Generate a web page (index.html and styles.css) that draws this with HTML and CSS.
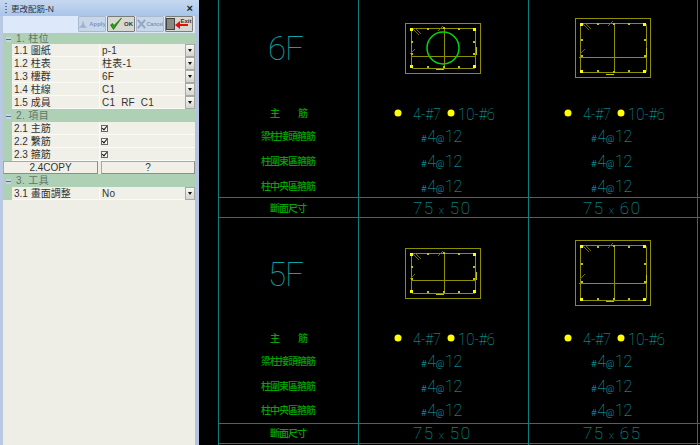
FILE: index.html
```html
<!DOCTYPE html>
<html lang="zh-Hant">
<head>
<meta charset="utf-8">
<title>更改配筋</title>
<link rel="stylesheet" href="styles.css">
</head>
<body>
<div class="app">
  <aside class="panel">
    <header class="titlebar">
      <span class="grip"></span>
      <span class="title">更改配筋-N</span>
      <span class="close">×</span>
    </header>
    <div class="toolbar">
      <button class="tool tool-off">
        <svg class="ico" width="10" height="11" viewBox="0 0 11 11"><path d="M5.500 1 L7 6 L10 9 H1 L4 6 Z" fill="#9fb3cc"/></svg>
        <span class="tool-label">Apply</span>
      </button>
      <button class="tool tool-on">
        <svg class="ico" width="14" height="14" viewBox="0 0 14 14"><path d="M1.500 8 L4.500 12.500 L12.500 1 L5 8.500 L3.500 6.500 Z" fill="#2a9a18" stroke="#1c7a10" stroke-width=".8"/></svg>
        <span class="tool-label">OK</span>
      </button>
      <button class="tool tool-off">
        <svg class="ico" width="9" height="12" viewBox="0 0 11 12"><path d="M1 1 L10 11 M10 1 L1 11" stroke="#8fa6c6" stroke-width="2.500"/></svg>
        <span class="tool-label tool-label-small">Cancel</span>
      </button>
      <button class="tool tool-on">
        <svg class="ico-exit" width="24" height="14" viewBox="0 0 24 14"><rect x="0.500" y="1.500" width="8" height="11" fill="#8a8a84" stroke="#444"/><path d="M22 7 H14 V4 L9 8 L14 12 V9 H22 Z" fill="#e01010"/></svg>
        <span class="tool-label tool-label-exit">Exit</span>
      </button>
    </div>

    <div class="section section-first"><span class="minus"></span>1. 柱位</div>
    <div class="row"><span class="gutter"></span><span class="label">1.1 圖紙</span><span class="value">p-1</span><span class="drop"></span></div>
    <div class="row"><span class="gutter"></span><span class="label">1.2 柱表</span><span class="value">柱表-1</span><span class="drop"></span></div>
    <div class="row"><span class="gutter"></span><span class="label">1.3 樓群</span><span class="value">6F</span><span class="drop"></span></div>
    <div class="row"><span class="gutter"></span><span class="label">1.4 柱線</span><span class="value">C1</span><span class="drop"></span></div>
    <div class="row"><span class="gutter"></span><span class="label">1.5 成員</span><span class="value">C1&nbsp; RF&nbsp; C1</span><span class="drop"></span></div>

    <div class="section"><span class="minus"></span>2. 項目</div>
    <div class="row"><span class="gutter"></span><span class="label">2.1 主筋</span><span class="value"><span class="check"></span></span></div>
    <div class="row"><span class="gutter"></span><span class="label">2.2 繫筋</span><span class="value"><span class="check"></span></span></div>
    <div class="row"><span class="gutter"></span><span class="label">2.3 箍筋</span><span class="value"><span class="check"></span></span></div>
    <div class="buttons"><button class="btn">2.4COPY</button><button class="btn">?</button></div>

    <div class="section"><span class="minus"></span>3. 工具</div>
    <div class="row"><span class="gutter"></span><span class="label">3.1 畫面調整</span><span class="value">No</span><span class="drop"></span></div>
  </aside>

  <main class="cad">
    <svg class="drawing" width="501" height="445" viewBox="199 0 501 445">
      <g class="grid-lines">
        <path d="M218.500 0 V445 M358.500 0 V445 M528.500 0 V445 M697.500 0 V445"/>
        <path d="M218 197.500 H700 M218 217.500 H700 M218 423.500 H700 M218 443.500 H700"/>
      </g>

      <!-- Section 1 -->
      <rect class="outer" x="405.500" y="23.500" width="75" height="50"/>
      <rect class="tie" x="411.500" y="28.500" width="64" height="40" rx="2"/>
      <path class="tie" d="M444.500 28 V68 M411 56.500 H476"/>
      <path class="hook" d="M413 29 L419 35 M415 28 L421 34 M438 31 L443 26 M410 54 L415 49"/>
      <path class="thick" d="M476.500 47 V55 M436 69.500 H444"/>
      <g class="bars"><rect x="410" y="28" width="3" height="3"/><rect x="473" y="28" width="3" height="3"/><rect x="410" y="65" width="3" height="3"/><rect x="473" y="65" width="3" height="3"/></g>
      <g class="dots"><rect x="443" y="27" width="2" height="2"/><rect x="443" y="66" width="2" height="2"/><rect x="411" y="53" width="2" height="2"/><rect x="473" y="53" width="2" height="2"/><rect x="427" y="28" width="2" height="2"/><rect x="458" y="28" width="2" height="2"/><rect x="427" y="66" width="2" height="2"/><rect x="458" y="66" width="2" height="2"/><rect x="411" y="41" width="2" height="2"/><rect x="473" y="41" width="2" height="2"/></g>
      <circle class="hole" cx="443" cy="48" r="16"/>

      <!-- Section 2 -->
      <rect class="outer" x="575.500" y="18.500" width="75" height="59"/>
      <rect class="tie" x="580.500" y="23.500" width="66" height="49" rx="2"/>
      <path class="tie" d="M614.500 23 V73 M579 57.500 H647"/>
      <path class="hook" d="M583 24 L589 30 M585 23 L591 29 M608 26 L613 21 M580 54 L585 49"/>
      <path class="thick" d="M646.500 48 V57 M606 74.500 H614"/>
      <g class="bars"><rect x="580" y="23" width="3" height="3"/><rect x="643" y="23" width="3" height="3"/><rect x="580" y="70" width="3" height="3"/><rect x="643" y="70" width="3" height="3"/></g>
      <g class="dots"><rect x="613" y="23" width="2" height="2"/><rect x="613" y="71" width="2" height="2"/><rect x="597" y="23" width="2" height="2"/><rect x="628" y="23" width="2" height="2"/><rect x="597" y="70" width="2" height="2"/><rect x="628" y="70" width="2" height="2"/><rect x="581" y="39" width="2" height="2"/><rect x="644" y="39" width="2" height="2"/><rect x="581" y="55" width="2" height="2"/><rect x="644" y="55" width="2" height="2"/></g>

      <!-- Section 3 -->
      <rect class="outer" x="405.500" y="248.500" width="75" height="50"/>
      <rect class="tie" x="411.500" y="253.500" width="64" height="40" rx="2"/>
      <path class="tie" d="M444.500 253 V293 M411 280.500 H476"/>
      <path class="hook" d="M413 254 L419 260 M415 253 L421 259 M438 256 L443 251 M410 279 L415 274"/>
      <path class="thick" d="M476.500 272 V280 M436 294.500 H444"/>
      <g class="bars"><rect x="410" y="253" width="3" height="3"/><rect x="473" y="253" width="3" height="3"/><rect x="410" y="290" width="3" height="3"/><rect x="473" y="290" width="3" height="3"/></g>
      <g class="dots"><rect x="443" y="252" width="2" height="2"/><rect x="443" y="291" width="2" height="2"/><rect x="427" y="253" width="2" height="2"/><rect x="458" y="253" width="2" height="2"/><rect x="427" y="291" width="2" height="2"/><rect x="458" y="291" width="2" height="2"/><rect x="411" y="266" width="2" height="2"/><rect x="473" y="266" width="2" height="2"/><rect x="411" y="278" width="2" height="2"/><rect x="473" y="278" width="2" height="2"/></g>

      <!-- Section 4 -->
      <rect class="outer" x="575.500" y="240.500" width="75" height="65"/>
      <rect class="tie" x="580.500" y="245.500" width="66" height="55" rx="2"/>
      <path class="tie" d="M614.500 245 V301 M579 283.500 H647"/>
      <path class="hook" d="M583 246 L589 252 M585 245 L591 251 M608 248 L613 243 M580 279 L585 274"/>
      <path class="thick" d="M646.500 275 V283 M606 301.500 H614"/>
      <g class="bars"><rect x="580" y="245" width="3" height="3"/><rect x="643" y="245" width="3" height="3"/><rect x="580" y="298" width="3" height="3"/><rect x="643" y="298" width="3" height="3"/></g>
      <g class="dots"><rect x="613" y="245" width="2" height="2"/><rect x="613" y="298" width="2" height="2"/><rect x="597" y="246" width="2" height="2"/><rect x="628" y="246" width="2" height="2"/><rect x="597" y="298" width="2" height="2"/><rect x="628" y="298" width="2" height="2"/><rect x="581" y="263" width="2" height="2"/><rect x="644" y="263" width="2" height="2"/><rect x="581" y="281" width="2" height="2"/><rect x="644" y="281" width="2" height="2"/></g>

      <!-- Floors -->
      <text class="floor" x="268" y="60">6F</text>
      <text class="floor" x="268" y="286">5F</text>

      <!-- Row labels -->
      <g class="cjk">
        <text x="270" y="117" class="cjk-wide">主　筋</text>
        <text x="261" y="140">梁柱接頭箍筋</text>
        <text x="261" y="165">柱圍束區箍筋</text>
        <text x="261" y="190">柱中央區箍筋</text>
        <text x="270" y="212">斷面尺寸</text>
        <text x="270" y="342" class="cjk-wide">主　筋</text>
        <text x="261" y="365">梁柱接頭箍筋</text>
        <text x="261" y="390">柱圍束區箍筋</text>
        <text x="261" y="414">柱中央區箍筋</text>
        <text x="270" y="437">斷面尺寸</text>
      </g>

      <!-- Bar dots -->
      <g class="bar-dot">
        <circle cx="398" cy="113" r="3.500"/><circle cx="451" cy="113" r="3.500"/>
        <circle cx="568" cy="113" r="3.500"/><circle cx="621" cy="113" r="3.500"/>
        <circle cx="398" cy="338" r="3.500"/><circle cx="451" cy="338" r="3.500"/>
        <circle cx="568" cy="338" r="3.500"/><circle cx="621" cy="338" r="3.500"/>
      </g>

      <g class="val">
        <text x="413" y="120" textLength="28" lengthAdjust="spacingAndGlyphs">4-#7</text><text x="458" y="120" textLength="37" lengthAdjust="spacingAndGlyphs">10-#6</text>
        <text x="583" y="120" textLength="28" lengthAdjust="spacingAndGlyphs">4-#7</text><text x="628" y="120" textLength="37" lengthAdjust="spacingAndGlyphs">10-#6</text>
        <text x="413" y="345" textLength="28" lengthAdjust="spacingAndGlyphs">4-#7</text><text x="458" y="345" textLength="37" lengthAdjust="spacingAndGlyphs">10-#6</text>
        <text x="583" y="345" textLength="28" lengthAdjust="spacingAndGlyphs">4-#7</text><text x="628" y="345" textLength="37" lengthAdjust="spacingAndGlyphs">10-#6</text>

        <g class="rebar">
          <text x="421" y="142"><tspan class="sm">#</tspan>4<tspan class="sm">@</tspan>12</text><text x="591" y="142"><tspan class="sm">#</tspan>4<tspan class="sm">@</tspan>12</text>
          <text x="421" y="167"><tspan class="sm">#</tspan>4<tspan class="sm">@</tspan>12</text><text x="591" y="167"><tspan class="sm">#</tspan>4<tspan class="sm">@</tspan>12</text>
          <text x="421" y="192"><tspan class="sm">#</tspan>4<tspan class="sm">@</tspan>12</text><text x="591" y="192"><tspan class="sm">#</tspan>4<tspan class="sm">@</tspan>12</text>
          <text x="421" y="367"><tspan class="sm">#</tspan>4<tspan class="sm">@</tspan>12</text><text x="591" y="367"><tspan class="sm">#</tspan>4<tspan class="sm">@</tspan>12</text>
          <text x="421" y="392"><tspan class="sm">#</tspan>4<tspan class="sm">@</tspan>12</text><text x="591" y="392"><tspan class="sm">#</tspan>4<tspan class="sm">@</tspan>12</text>
          <text x="421" y="416"><tspan class="sm">#</tspan>4<tspan class="sm">@</tspan>12</text><text x="591" y="416"><tspan class="sm">#</tspan>4<tspan class="sm">@</tspan>12</text>
        </g>

        <text x="413" y="214" textLength="57">75<tspan class="sm"> x </tspan>50</text><text x="583" y="214" textLength="57">75<tspan class="sm"> x </tspan>60</text>
        <text x="413" y="439" textLength="57">75<tspan class="sm"> x </tspan>50</text><text x="583" y="439" textLength="57">75<tspan class="sm"> x </tspan>65</text>
      </g>
    </svg>
  </main>
</div>
</body>
</html>
```
FILE: styles.css
```css
* { box-sizing: border-box; }
html, body { margin: 0; padding: 0; height: 100%; overflow: hidden; background: #000; }
.app { display: flex; width: 700px; height: 445px; }

.panel {
  width: 199px;
  flex: none;
  display: flex;
  flex-direction: column;
  background: #eeeee6;
  border-left: 3px solid #b9c9e2;
  border-right: 4px solid #b4c4de;
  font: 10px "Liberation Sans", "Noto Sans CJK TC", sans-serif;
  color: #333;
}
.titlebar {
  margin-left: -3px;
  margin-right: -4px;
  height: 16px;
  display: flex;
  align-items: center;
  background: linear-gradient(#c6d8f0, #a9c5ea);
  padding: 0 6px 0 5px;
}
.grip { width: 2px; height: 11px; margin-right: 4px; background: repeating-linear-gradient(#5f7796 0 1px, transparent 1px 3px); }
.title { flex: 1; font-size: 8.500px; color: #24344c; }
.close { font-size: 11px; font-weight: bold; color: #222; }

.toolbar {
  height: 17px;
  display: flex;
  justify-content: flex-end;
  gap: 1px;
  padding-right: 2px;
  background: #dde9fa;
}
.tool {
  width: 28px;
  height: 16px;
  margin: 0;
  padding: 0;
  display: flex;
  align-items: center;
  justify-content: center;
  gap: 1px;
  border: 1px solid #a9b9d0;
  border-radius: 1px;
  font: bold 6px "Liberation Sans", sans-serif;
  overflow: hidden;
}
.tool-off { background: #c8d6ea; color: #8097b8; }
.tool-on { background: #d8d8d2; color: #333; border-color: #7c7c78; }
.ico, .ico-exit { flex: none; }
.ico-exit { margin-right: -11px; }
.tool-label { white-space: nowrap; }
.tool-label-small { font-size: 5.500px; letter-spacing: -.2px; }
.tool-label-exit { margin-top: -6px; }

.section {
  height: 13px;
  display: flex;
  align-items: center;
  background: #aed0b5;
  color: #61756a;
  font-size: 10px;
  line-height: 13px;
  letter-spacing: .4px;
}
.section-first { height: 11px; }
.minus {
  width: 5px;
  height: 5px;
  margin: 1px 5px 0 3px;
  background: linear-gradient(#c4d4e6 0 2px, #57708c 2px 3px, #c4d4e6 3px);
}
.row {
  height: 13px;
  display: grid;
  grid-template-columns: 9px 88px 1fr auto;
  background: #f0f0e8;
  line-height: 13px;
}
.gutter { background: #aed0b5; }
.label, .value {
  border-bottom: 1px solid #fafaf6;
  white-space: nowrap;
  overflow: hidden;
}
.label { padding-left: 2px; border-right: 1px solid #fafaf6; }
.value { padding-left: 2px; letter-spacing: .2px; display: flex; align-items: center; }
.drop {
  width: 10px;
  height: 13px;
  background: linear-gradient(#f8f8f6, #d4d4d0);
  border: 1px solid #a8a8a4;
  position: relative;
}
.drop::after {
  content: "";
  position: absolute;
  left: 2px;
  top: 4px;
  border: 2px solid transparent;
  border-top: 3px solid #111;
  border-bottom: 0;
}
.check {
  width: 7px;
  height: 7px;
  background: #f6f6f2;
  border: 1px solid #666;
  position: relative;
  margin-left: -1px;
}
.check::after {
  content: "";
  position: absolute;
  left: 1px;
  top: -1px;
  width: 2px;
  height: 4px;
  border: solid #111;
  border-width: 0 1px 1px 0;
  transform: rotate(40deg);
}
.buttons {
  height: 13px;
  display: grid;
  grid-template-columns: 95px 1fr;
  gap: 3px;
}
.btn {
  height: 13px;
  margin: 0;
  padding: 0;
  background: #f0f0e8;
  border: 1px solid #8e8e8a;
  border-left-color: #a8a8a4;
  border-top-color: #a8a8a4;
  font: 10px/11px "Liberation Sans", sans-serif;
  color: #333;
}

.cad { flex: 1; background: #000; }
.drawing { display: block; }
.grid-lines path { fill: none; stroke: #078080; stroke-width: 1; }
.outer { fill: none; stroke: #8e8e00; stroke-width: 1; }
.tie { fill: none; stroke: #8e8e00; stroke-width: 1; }
.hook { fill: none; stroke: #6e6e00; stroke-width: 1; }
.thick { fill: none; stroke: #c8c800; stroke-width: 1; }
.bars rect { fill: #ffff00; }
.dots rect { fill: #c4c400; }
.hole { fill: none; stroke: #00d810; stroke-width: 1.500; }
.bar-dot circle { fill: #ffff00; }

.floor {
  font: 100 33px Roboto, "Liberation Sans", sans-serif;
  fill: #0aa4a4;
  letter-spacing: -1px;
}
.cjk text {
  font: 500 10px "Noto Sans CJK TC", sans-serif;
  fill: #00a800;
  letter-spacing: -1px;
}
.cjk .cjk-wide { letter-spacing: 4px; }
.val text {
  font: 100 17px Roboto, "Liberation Sans", sans-serif;
  fill: #0cb0b0;
}
.val .sm { font-size: 11px; }
.val .rebar text { font-size: 16px; letter-spacing: -.2px; }
.val .rebar .sm { font-size: 9.500px; font-weight: 300; letter-spacing: .6px; }
```
